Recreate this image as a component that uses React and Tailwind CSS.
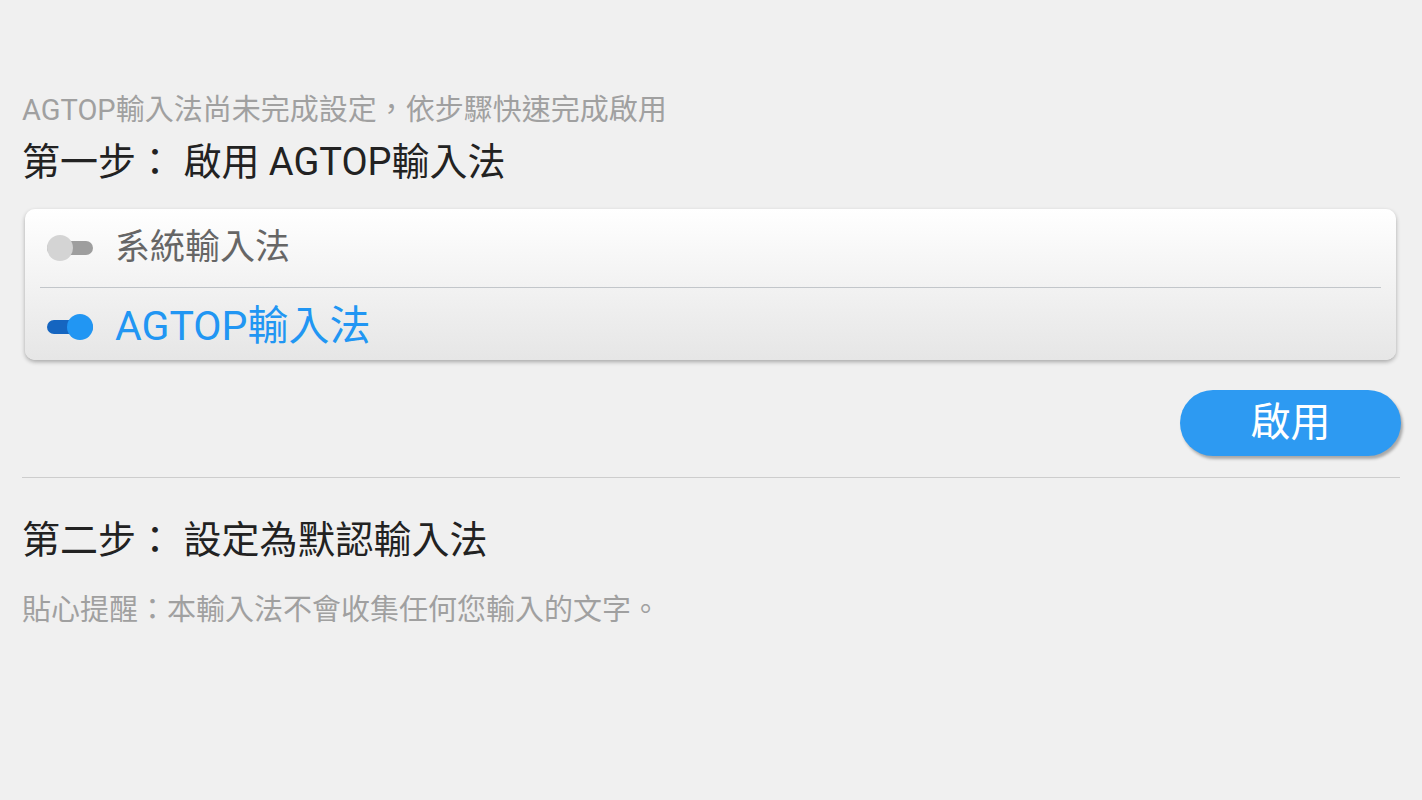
import React from 'react';

const font = { fontFamily: "Roboto, 'Noto Sans CJK TC', sans-serif" };

const Toggle = ({ on }) => (
  <div className="relative w-[46px] h-[26px] flex items-center">
    <div className={`w-full h-[14px] rounded-full ${on ? 'bg-[#1565c0]' : 'bg-[#9e9e9e]'}`} />
    <div
      className={`absolute top-0 w-[26px] h-[26px] rounded-full ${on ? 'right-0 bg-[#2196f3]' : 'left-0 bg-[#d4d4d4]'}`}
    />
  </div>
);

export default function App() {
  return (
    <div className="w-[1422px] h-[800px] bg-[#f0f0f0] pl-[22px] pr-[22px] pt-[90px]" style={font}>
      <p className="text-[29px] leading-[40px] text-[#a0a0a0]">
        AGTOP輸入法尚未完成設定，依步驟快速完成啟用
      </p>

      <h2 className="mt-[6px] text-[38px] leading-[52px] text-[#222222]">
        第一步： 啟用 AGTOP輸入法
      </h2>

      <div className="mt-[21px] ml-[3px] mr-[4px] rounded-[10px] bg-gradient-to-b from-[#ffffff] to-[#e6e6e6] shadow-[0_2px_4px_rgba(0,0,0,0.3)] px-[15px]">
        <div className="h-[78px] flex items-center gap-[22px] pl-[7px]">
          <Toggle on={false} />
          <span className="text-[35px] text-[#666666]">系統輸入法</span>
        </div>
        <div className="h-px bg-[#c2c6ca]" />
        <div className="h-[72px] flex items-center gap-[22px] pl-[7px] pt-[6px]">
          <Toggle on />
          <span className="text-[41px] text-[#2196f3]">AGTOP輸入法</span>
        </div>
      </div>

      <div className="flex justify-end mt-[30px]">
        <button className="w-[221px] h-[66px] rounded-full bg-[#2d9af2] text-white text-[40px] shadow-[2px_3px_3px_rgba(0,0,0,0.3)] mr-[-1px]">
          啟用
        </button>
      </div>

      <div className="mt-[21px] h-px bg-[#cdcdcd]" />

      <h2 className="mt-[36px] text-[38px] leading-[52px] text-[#222222]">
        第二步： 設定為默認輸入法
      </h2>

      <p className="mt-[24px] text-[29px] leading-[40px] text-[#a0a0a0]">
        貼心提醒：本輸入法不會收集任何您輸入的文字。
      </p>
    </div>
  );
}
